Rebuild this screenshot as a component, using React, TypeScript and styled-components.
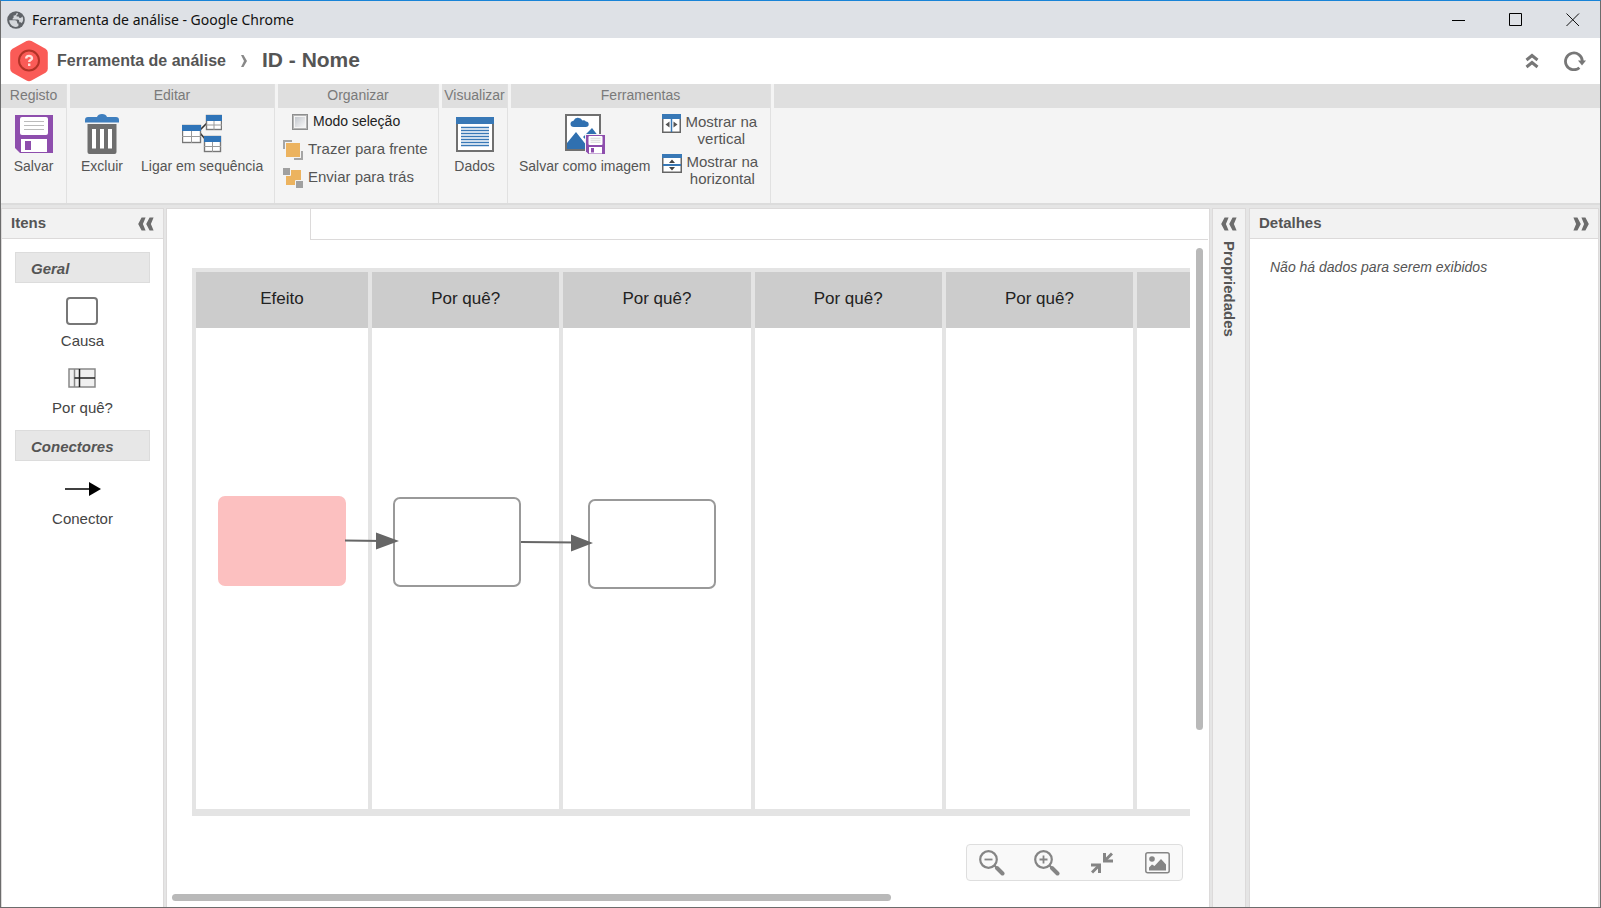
import React from "react";
import styled, { createGlobalStyle, css } from "styled-components";

const sans = `"Liberation Sans", Arial, sans-serif`;

const GlobalStyle = createGlobalStyle`
  *, *::before, *::after { box-sizing: border-box; }
  body { margin: 0; background: #fff; font-family: ${sans}; font-size: 14px; color: #555; }
  button { font: inherit; color: inherit; border: 0; padding: 0; margin: 0; background: none; cursor: pointer; }
  svg { display: block; flex: none; }
  h1, h2, h3, p { margin: 0; }
`;

const Window = styled.div`
  display: flex;
  flex-direction: column;
  min-height: 100vh;
  border: 1px solid #6c6c6c;
  border-top-color: #1883d7;
  background: #fff;
`;

const TitleBar = styled.div`
  display: flex;
  align-items: center;
  height: 37px;
  padding: 0 20px 0 6px;
  background: #dee1e6;
  color: #111;
`;

const WindowTitle = styled.span`
  flex: 1;
  margin-left: 7px;
  font-family: "Noto Sans", "Open Sans", sans-serif;
  font-size: 14px;
  line-height: 20px;
`;

const WindowControls = styled.div`
  display: flex;
  gap: 43px;
`;

const Header = styled.header`
  display: flex;
  align-items: center;
  height: 46px;
  padding: 0 14px 0 8px;
`;

const Breadcrumb = styled.nav`
  display: flex;
  flex: 1;
  align-items: center;
  gap: 12px;
  margin-left: 8px;
`;

const CrumbLink = styled.a`
  padding-right: 2px;
  font-size: 16px;
  line-height: 24px;
  font-weight: bold;
  color: #555;
  text-decoration: none;
`;

const PageTitle = styled.h1`
  font-size: 21px;
  line-height: 24px;
  padding: 0 0 2px 2px;
`;

const HeaderActions = styled.div`
  display: flex;
  align-items: center;
  gap: 25px;
`;

const Ribbon = styled.div`
  display: flex;
  gap: 3px;
  height: 121px;
  border-bottom: 2px solid #dcdcdc;
  background: #f4f4f4;
`;

const Group = styled.section<{ $width?: number }>`
  display: flex;
  flex-direction: column;
  ${({ $width }) =>
    $width
      ? css`flex: none; width: ${$width}px; border-right: 1px solid #e1e1e1;`
      : css`flex: 1;`}
`;

const GroupTitle = styled.h2`
  height: 24px;
  background: #dfdfdf;
  color: #7a7a7a;
  font-size: 14px;
  line-height: 22px;
  font-weight: normal;
  text-align: center;
`;

const GroupBody = styled.div<{ $gap?: number; $start?: number }>`
  display: flex;
  justify-content: ${({ $start }) => ($start ? "flex-start" : "center")};
  gap: ${({ $gap }) => $gap ?? 0}px;
  padding: 6px 0 0 ${({ $start }) => $start ?? 0}px;
`;

const LargeButton = styled.button`
  display: flex;
  flex-direction: column;
  align-items: center;
  gap: 4px;
  line-height: 16px;
  white-space: nowrap;
`;

const Stack = styled.div`
  display: flex;
  flex-direction: column;
  align-items: flex-start;
  padding-left: 5px;
`;

const rowStyle = css`
  display: flex;
  align-items: center;
  gap: 5px;
  height: 28px;
  font-size: 15px;
  line-height: 18px;
  white-space: nowrap;
`;

const RowLabel = styled.span`
  padding-bottom: 2px;
`;

const RowButton = styled.button`
  ${rowStyle}
`;

const CheckRow = styled.label`
  ${rowStyle}
  font-size: 14px;
  padding-left: 9px;
  color: #222;
`;

const CheckBox = styled.input`
  appearance: none;
  width: 16px;
  height: 16px;
  margin: 0;
  border: 1px solid #8e8f8f;
  background: linear-gradient(135deg, #c3c7cd, #f6f6f6) content-box, #f4f4f4;
  padding: 2px;
  outline: 1px solid #b4b4b4;
  outline-offset: -2px;
`;

const TallStack = styled.div`
  display: flex;
  flex-direction: column;
  gap: 7px;
`;

const TallButton = styled.button`
  display: flex;
  align-items: flex-start;
  gap: 5px;
  font-size: 15px;
  line-height: 17px;
`;

const TallLabel = styled.span`
  margin-top: -1px;
`;

const Workspace = styled.main`
  display: flex;
  flex: 1;
  gap: 2px;
  padding-top: 3px;
  padding-right: 1px;
  background: #e5e5e5;
`;

const Panel = styled.section<{ $width?: number }>`
  display: flex;
  flex-direction: column;
  ${({ $width }) => ($width ? css`flex: none; width: ${$width}px;` : css`flex: 1; min-width: 0;`)}
  border: 1px solid #dcdada;
  border-bottom: 0;
  background: #fff;
`;

const PanelHeader = styled.div`
  display: flex;
  align-items: center;
  justify-content: space-between;
  height: 30px;
  padding: 0 9px;
  border-bottom: 1px solid #dcdada;
  background: #f2f2f2;
`;

const PanelTitle = styled.h2`
  font-size: 15px;
  line-height: 18px;
`;

const PanelHeading = styled(PanelTitle)`
  padding-bottom: 2px;
`;

const Palette = styled.div`
  display: flex;
  flex-direction: column;
  align-items: center;
  padding: 13px 13px 0;
`;

const PaletteHeading = styled.h3`
  align-self: stretch;
  height: 31px;
  padding-left: 15px;
  border: 1px solid #dcdcdc;
  background: #e7e7e7;
  font-size: 15px;
  line-height: 32px;
  font-style: italic;
`;

const PaletteItem = styled.button`
  display: flex;
  flex-direction: column;
  align-items: center;
  justify-content: flex-end;
  height: 67px;
  font-size: 15px;
  line-height: 18px;
  color: #444;
`;

const PaletteIcon = styled.span`
  display: flex;
  align-items: center;
  height: 42px;
`;

const TabStrip = styled.div`
  display: flex;
  height: 31px;
  padding-right: 1px;
`;

const ActiveTab = styled.div`
  width: 143px;
`;

const TabRest = styled.div`
  flex: 1;
  border: solid #dcdada;
  border-width: 0 0 1px 1px;
`;

const Stage = styled.div`
  display: flex;
  flex: 1;
`;

const Diagram = styled.div`
  position: relative;
  display: flex;
  flex: 1;
  min-width: 0;
  padding: 28px 6px 0 25px;
`;

const Board = styled.div`
  display: grid;
  flex: 1;
  grid-template-columns: 176px repeat(4, 1fr) 53px;
  border: solid #e4e4e4;
  border-width: 4px 0 7px 4px;
`;

const Column = styled.div`
  border-right: 4px solid #e4e4e4;
  &:last-child { border-right: 0; }
`;

const ColumnTitle = styled.h3`
  height: 56px;
  background: #ccc;
  color: #222;
  font-size: 17px;
  line-height: 54px;
  font-weight: normal;
  text-align: center;
`;

const Node = styled.div<{ $x: number; $y: number; $effect?: boolean }>`
  position: absolute;
  left: ${({ $x }) => $x}px;
  top: ${({ $y }) => $y}px;
  width: 128px;
  height: 90px;
  border-radius: 7px;
  border: 2px solid ${({ $effect }) => ($effect ? "#fcc0c0" : "#999")};
  background: ${({ $effect }) => ($effect ? "#fcc0c0" : "#fff")};
`;

const Links = styled.svg`
  position: absolute;
  left: 0;
  top: 0;
`;

const VerticalTrack = styled.div`
  display: flex;
  width: 13px;
  padding: 8px 6px 86px 0;
`;

const Thumb = styled.div`
  flex: 1;
  border-radius: 4px;
  background: #b9b9b9;
`;

const HorizontalTrack = styled.div`
  display: flex;
  height: 13px;
  width: 70%;
  padding: 0 5px 6px;
`;

const StageFooter = styled.div`
  display: flex;
  justify-content: flex-end;
  padding: 28px 26px 13px;
`;

const ZoomBar = styled.div`
  display: flex;
  justify-content: space-between;
  width: 217px;
  height: 37px;
  padding: 0 12px;
  border: 1px solid #dedede;
  border-radius: 4px;
  background: #f9f9f9;
`;

const ZoomButton = styled.button`
  display: flex;
  width: 26px;
  align-items: center;
  justify-content: center;
`;

const CollapsedPanel = styled(Panel)`
  align-items: center;
  gap: 10px;
  margin-right: 1px;
  padding-top: 8px;
  background: #f2f2f2;
`;

const VerticalTitle = styled(PanelTitle)`
  writing-mode: vertical-rl;
`;

const EmptyText = styled.p`
  padding: 19px 20px;
  font-size: 14px;
  line-height: 18px;
  font-style: italic;
`;

const Globe = () => (
  <svg width="18" height="18" viewBox="0 0 18 18">
    <circle cx="9" cy="9" r="8.8" fill="#5f6368" />
    <path d="M2.200 9.200H8q2.200 0 2.200 2.200v1.200h1.200V15Q9 16.600 6 15.300 2.600 13.400 2.200 9.200zM9.600 2.100q-.2 1.700-1.600 2.300H6.600v1.800q0 1-1 1.200v1.200h5.200q1.400 0 1.400 1.500v1.200h1q1.100 0 1.500 1Q17.200 9 15.400 5.600q-1 1.600-2.400 1.400-1.300-.2-1.300-1.600H9.600V4q1.600-.3 1.400-1.700z" fill="#d4d7db" />
  </svg>
);

const Hexagon = () => (
  <svg width="40" height="42" viewBox="0 0 40 42">
    <path d="M17.500 1.100q2.500-1.300 5 0l14 7.700q2.300 1.300 2.300 4v16q0 2.700-2.300 4l-14 7.700q-2.500 1.300-5 0l-14-7.700q-2.300-1.300-2.300-4v-16q0-2.700 2.300-4z" fill="#fa5b57" />
    <circle cx="20" cy="20.500" r="10" fill="none" stroke="#b13327" strokeWidth="2" />
    <path d="M17.200 18.500c0-3.600 5.800-3.400 5.800-.3 0 2-2.800 1.800-2.800 3.800M20.200 23.500v2.400" fill="none" stroke="#ffe1dc" strokeWidth="2.400" />
  </svg>
);

const CrumbArrow = () => (
  <svg width="8" height="14" viewBox="0 0 8 14">
    <path d="M1 1h2.500L7 7l-3.500 6H1l3-6z" fill="#888" />
  </svg>
);

const Minimize = () => (
  <svg width="14" height="14" viewBox="0 0 14 14"><path d="M0 7.500h13" stroke="#000" /></svg>
);
const Maximize = () => (
  <svg width="14" height="14" viewBox="0 0 14 14"><path d="M.5 .5h12v12H.5z" fill="none" stroke="#000" /></svg>
);
const Close = () => (
  <svg width="14" height="14" viewBox="0 0 14 14"><path d="M.5 .5L13 13M13 .5L.5 13" fill="none" stroke="#111" /></svg>
);

const ChevronsUp = () => (
  <svg width="14" height="16" viewBox="0 0 14 16">
    <path d="M1.500 7L7 2.500 12.500 7M1.500 14L7 9.500l5.500 4.500" fill="none" stroke="#777" strokeWidth="3" />
  </svg>
);

const Refresh = () => (
  <svg width="22" height="20" viewBox="0 0 22 20">
    <path d="M15.400 16.700A8.400 8.400 0 1 1 18.300 10" fill="none" stroke="#777" strokeWidth="2.800" />
    <path d="M14 9.600h8l-4 5z" fill="#777" />
  </svg>
);

const DoubleChevron = ({ right = false }: { right?: boolean }) => (
  <svg width="16" height="14" viewBox="0 0 16 14">
    <path
      transform={right ? "matrix(-1 0 0 1 16 0)" : undefined}
      d="M3.600 .5h4L4.900 7l2.700 6.500h-4L.2 7zM11.600 .5h4L12.900 7l2.700 6.500h-4L8.200 7z"
      fill="#6c6c6c"
    />
  </svg>
);

const floppy = (
  <>
    <path d="M0 0h38v38H5l-5-5z" fill="#8e4ead" />
    <rect x="5" y="2" width="28" height="18" rx="2" fill="#fff" />
    <path d="M9 6.500h20M9 10.500h20M9 14.500h20" stroke="#bbb" strokeWidth="1.200" />
    <rect x="6" y="24" width="26" height="13" fill="#fff" />
    <rect x="10" y="26" width="6" height="9" fill="#8e4ead" />
  </>
);

const SaveIcon = () => (
  <svg width="38" height="40" viewBox="0 -1 38 40">{floppy}</svg>
);

const TrashIcon = () => (
  <svg width="34" height="40" viewBox="0 0 34 40">
    <path d="M0 8.500V6q0-3 3-3h9q1-3 5-3t5 3h9q3 0 3 3v2.500z" fill="#3f7fbf" />
    <path d="M2.500 10h29v28q0 2-2 2h-25q-2 0-2-2z" fill="#6e6e6e" />
    <path d="M9 15v19.500M17 15v19.500M25 15v19.500" stroke="#fff" strokeWidth="4" />
  </svg>
);

const MiniTable = ({ x, y, w, h }: { x: number; y: number; w: number; h: number }) => (
  <g>
    <rect x={x + 0.5} y={y + 0.5} width={w - 1} height={h - 1} fill="#fff" stroke="#777" strokeWidth="1.400" />
    <rect x={x} y={y} width={w} height="6" fill="#2f74b8" />
    <path d={`M${x + w / 2} ${y + 6}V${y + h}M${x} ${y + h / 2 + 2.5}H${x + w}`} stroke="#9a9a9a" />
  </g>
);

const SequenceIcon = () => (
  <svg width="40" height="40" viewBox="0 0 40 40">
    <path d="M18 16l7-7M18 19l6 7" stroke="#333" strokeWidth="1.600" />
    <MiniTable x={0} y={11} w={19} h={18} />
    <MiniTable x={24} y={1} w={16} h={15} />
    <MiniTable x={22} y={22} w={17} h={16} />
  </svg>
);

const FrontIcon = () => (
  <svg width="20" height="20" viewBox="0 0 20 20">
    <path d="M0 0h9v9H0zM11 11h9v9h-9z" fill="#a5a5a5" />
    <rect x="2.500" y="2.500" width="15" height="15" fill="#ecb35f" stroke="#f4f4f4" />
  </svg>
);

const BackIcon = () => (
  <svg width="20" height="20" viewBox="0 0 20 20">
    <rect x="3" y="2" width="15" height="15" fill="#ecb35f" />
    <path d="M-.5 -.5h8v8h-8zM12.500 12.500h8v8h-8z" fill="#a0a0a0" stroke="#f4f4f4" />
  </svg>
);

const DataIcon = () => (
  <svg width="38" height="40" viewBox="0 0 38 40">
    <rect x="1" y="4" width="36" height="33" fill="#fff" stroke="#707070" strokeWidth="2" />
    <rect width="38" height="7" y="3" fill="#3878b6" />
    <path d="M5 13.500h28M5 16.500h28M5 19.500h28M5 22.500h28M5 25.500h28M5 28.500h28M5 31.500h28" stroke="#3878b6" strokeWidth="1.400" />
  </svg>
);

const SaveImageIcon = () => (
  <svg width="40" height="40" viewBox="0 0 40 40">
    <rect x="1" y="1" width="34" height="35" fill="#fff" stroke="#707070" strokeWidth="2" />
    <path d="M9 13q-3.500 0-3.500-3.300 0-2.500 3-3Q10 3.500 13 3.800q3 0 4.500 2.700 2-.8 3.400 1 2.800 .3 2.800 2.800 0 2.700-3 2.700z" fill="#3070b0" />
    <path d="M2 35V29l9-11 11 14v3zM18 23l9-9 7 9-8 8z" fill="#3070b0" />
    <rect x="20" y="20" width="20" height="20" fill="#f4f4f4" />
    <svg x="21" y="21" width="19" height="19" viewBox="0 0 38 38">{floppy}</svg>
  </svg>
);

const ShowVerticalIcon = () => (
  <svg width="19" height="19" viewBox="0 0 19 19">
    <rect x=".75" y=".75" width="17.500" height="17.500" fill="#fff" stroke="#666" strokeWidth="1.500" />
    <rect width="19" height="5" fill="#3878b6" />
    <path d="M9.500 5v13" stroke="#3878b6" strokeWidth="1.500" />
    <path d="M7.500 7.500v6l-4-3zM11.500 7.500v6l4-3z" fill="#555" />
  </svg>
);

const ShowHorizontalIcon = () => (
  <svg width="20" height="19" viewBox="0 0 20 19">
    <rect x=".75" y=".75" width="18.500" height="17.500" fill="#fff" stroke="#666" strokeWidth="1.500" />
    <rect width="20" height="4" fill="#3878b6" />
    <path d="M1 11h18" stroke="#3878b6" strokeWidth="2" />
    <path d="M7 9h6l-3-3.500zM7 13h6l-3 3.500z" fill="#444" />
  </svg>
);

const CauseIcon = () => (
  <svg width="32" height="28" viewBox="0 0 32 28">
    <rect x="1" y="1" width="30" height="26" rx="3" fill="#fff" stroke="#777" strokeWidth="2" />
  </svg>
);

const WhyIcon = () => (
  <svg width="28" height="20" viewBox="0 0 28 20">
    <rect x="1" y="1" width="26" height="18" fill="#f0f0f0" stroke="#888" strokeWidth="1.500" />
    <path d="M6.500 1v18" stroke="#888" strokeWidth="1.500" />
    <path d="M11.500 1v18M6.500 10H27" stroke="#222" strokeWidth="1.500" />
  </svg>
);

const ConnectorIcon = () => (
  <svg width="36" height="14" viewBox="0 0 36 14">
    <path d="M0 7h26" stroke="#000" strokeWidth="1.500" />
    <path d="M24 0l12 7-12 7z" fill="#000" />
  </svg>
);

const Magnifier = ({ plus = false }: { plus?: boolean }) => (
  <svg width="26" height="26" viewBox="0 0 26 26">
    <circle cx="9.500" cy="9.500" r="8.300" fill="none" stroke="#858585" strokeWidth="2.200" />
    <path d={plus ? "M5.500 9.500h8M9.500 5.500v8" : "M5.500 9.500h8"} stroke="#858585" strokeWidth="1.800" />
    <path d="M15.500 15.500l3 3" stroke="#858585" strokeWidth="2" />
    <path d="M18 18l5.500 5.500" stroke="#858585" strokeWidth="4" strokeLinecap="round" />
  </svg>
);

const Compress = () => (
  <svg width="22" height="22" viewBox="0 0 22 22">
    <path d="M21 1.500l-7 7M1 20.500l7-7" stroke="#858585" strokeWidth="3" />
    <path d="M13.500 1v8H22M0 13h8.500v8" fill="none" stroke="#858585" strokeWidth="3" />
  </svg>
);

const Picture = () => (
  <svg width="25" height="22" viewBox="0 0 25 22">
    <rect x=".8" y=".8" width="23.400" height="20" rx="2" fill="none" stroke="#858585" strokeWidth="1.500" />
    <circle cx="7" cy="7" r="2.800" fill="#858585" />
    <path d="M4 18.500v-3l3-3 2.500 1.500 6.500-7 5 5.500v6z" fill="#858585" />
  </svg>
);

const columns = ["Efeito", "Por quê?", "Por quê?", "Por quê?", "Por quê?", ""];

export default function App() {
  return (
    <>
      <GlobalStyle />
      <Window>
        <TitleBar>
          <Globe />
          <WindowTitle>Ferramenta de análise - Google Chrome</WindowTitle>
          <WindowControls>
            <button aria-label="Minimizar"><Minimize /></button>
            <button aria-label="Maximizar"><Maximize /></button>
            <button aria-label="Fechar"><Close /></button>
          </WindowControls>
        </TitleBar>

        <Header>
          <Hexagon />
          <Breadcrumb>
            <CrumbLink href="#">Ferramenta de análise</CrumbLink>
            <CrumbArrow />
            <PageTitle>ID - Nome</PageTitle>
          </Breadcrumb>
          <HeaderActions>
            <button aria-label="Recolher"><ChevronsUp /></button>
            <button aria-label="Atualizar"><Refresh /></button>
          </HeaderActions>
        </Header>

        <Ribbon>
          <Group $width={66}>
            <GroupTitle>Registo</GroupTitle>
            <GroupBody>
              <LargeButton><SaveIcon />Salvar</LargeButton>
            </GroupBody>
          </Group>
          <Group $width={205}>
            <GroupTitle>Editar</GroupTitle>
            <GroupBody $gap={18} $start={11}>
              <LargeButton><TrashIcon />Excluir</LargeButton>
              <LargeButton><SequenceIcon />Ligar em sequência</LargeButton>
            </GroupBody>
          </Group>
          <Group $width={161}>
            <GroupTitle>Organizar</GroupTitle>
            <Stack>
              <CheckRow><CheckBox type="checkbox" /><RowLabel>Modo seleção</RowLabel></CheckRow>
              <RowButton><FrontIcon /><RowLabel>Trazer para frente</RowLabel></RowButton>
              <RowButton><BackIcon /><RowLabel>Enviar para trás</RowLabel></RowButton>
            </Stack>
          </Group>
          <Group $width={66}>
            <GroupTitle>Visualizar</GroupTitle>
            <GroupBody>
              <LargeButton><DataIcon />Dados</LargeButton>
            </GroupBody>
          </Group>
          <Group $width={260}>
            <GroupTitle>Ferramentas</GroupTitle>
            <GroupBody $gap={11} $start={8}>
              <LargeButton><SaveImageIcon />Salvar como imagem</LargeButton>
              <TallStack>
                <TallButton><ShowVerticalIcon /><TallLabel>Mostrar na<br />vertical</TallLabel></TallButton>
                <TallButton><ShowHorizontalIcon /><TallLabel>Mostrar na<br />horizontal</TallLabel></TallButton>
              </TallStack>
            </GroupBody>
          </Group>
          <Group><GroupTitle /></Group>
        </Ribbon>

        <Workspace>
          <Panel $width={163}>
            <PanelHeader>
              <PanelHeading>Itens</PanelHeading>
              <button aria-label="Recolher itens"><DoubleChevron /></button>
            </PanelHeader>
            <Palette>
              <PaletteHeading>Geral</PaletteHeading>
              <PaletteItem><PaletteIcon><CauseIcon /></PaletteIcon>Causa</PaletteItem>
              <PaletteItem><PaletteIcon><WhyIcon /></PaletteIcon>Por quê?</PaletteItem>
            </Palette>
            <Palette>
              <PaletteHeading>Conectores</PaletteHeading>
              <PaletteItem><PaletteIcon><ConnectorIcon /></PaletteIcon>Conector</PaletteItem>
            </Palette>
          </Panel>

          <Panel>
            <TabStrip><ActiveTab /><TabRest /></TabStrip>
            <Stage>
              <Diagram>
                <Board>
                  {columns.map((title, i) => (
                    <Column key={i}><ColumnTitle>{title}</ColumnTitle></Column>
                  ))}
                </Board>
                <Node $x={51} $y={256} $effect />
                <Node $x={226} $y={257} />
                <Node $x={421} $y={259} />
                <Links width="560" height="360" viewBox="0 0 560 360">
                  <path d="M178 300.500l38 .5M354 302l56 .6" stroke="#666" strokeWidth="2" />
                  <path d="M209 292.500v17l23-8.500zM404 294.500v17l22-8.500z" fill="#666" />
                </Links>
              </Diagram>
              <VerticalTrack><Thumb /></VerticalTrack>
            </Stage>
            <StageFooter>
              <ZoomBar>
                <ZoomButton aria-label="Reduzir"><Magnifier /></ZoomButton>
                <ZoomButton aria-label="Ampliar"><Magnifier plus /></ZoomButton>
                <ZoomButton aria-label="Ajustar"><Compress /></ZoomButton>
                <ZoomButton aria-label="Imagem"><Picture /></ZoomButton>
              </ZoomBar>
            </StageFooter>
            <HorizontalTrack><Thumb /></HorizontalTrack>
          </Panel>

          <CollapsedPanel as="aside" $width={34}>
            <button aria-label="Expandir propriedades"><DoubleChevron /></button>
            <VerticalTitle>Propriedades</VerticalTitle>
          </CollapsedPanel>

          <Panel $width={350}>
            <PanelHeader>
              <PanelHeading>Detalhes</PanelHeading>
              <button aria-label="Recolher detalhes"><DoubleChevron right /></button>
            </PanelHeader>
            <EmptyText>Não há dados para serem exibidos</EmptyText>
          </Panel>
        </Workspace>
      </Window>
    </>
  );
}
